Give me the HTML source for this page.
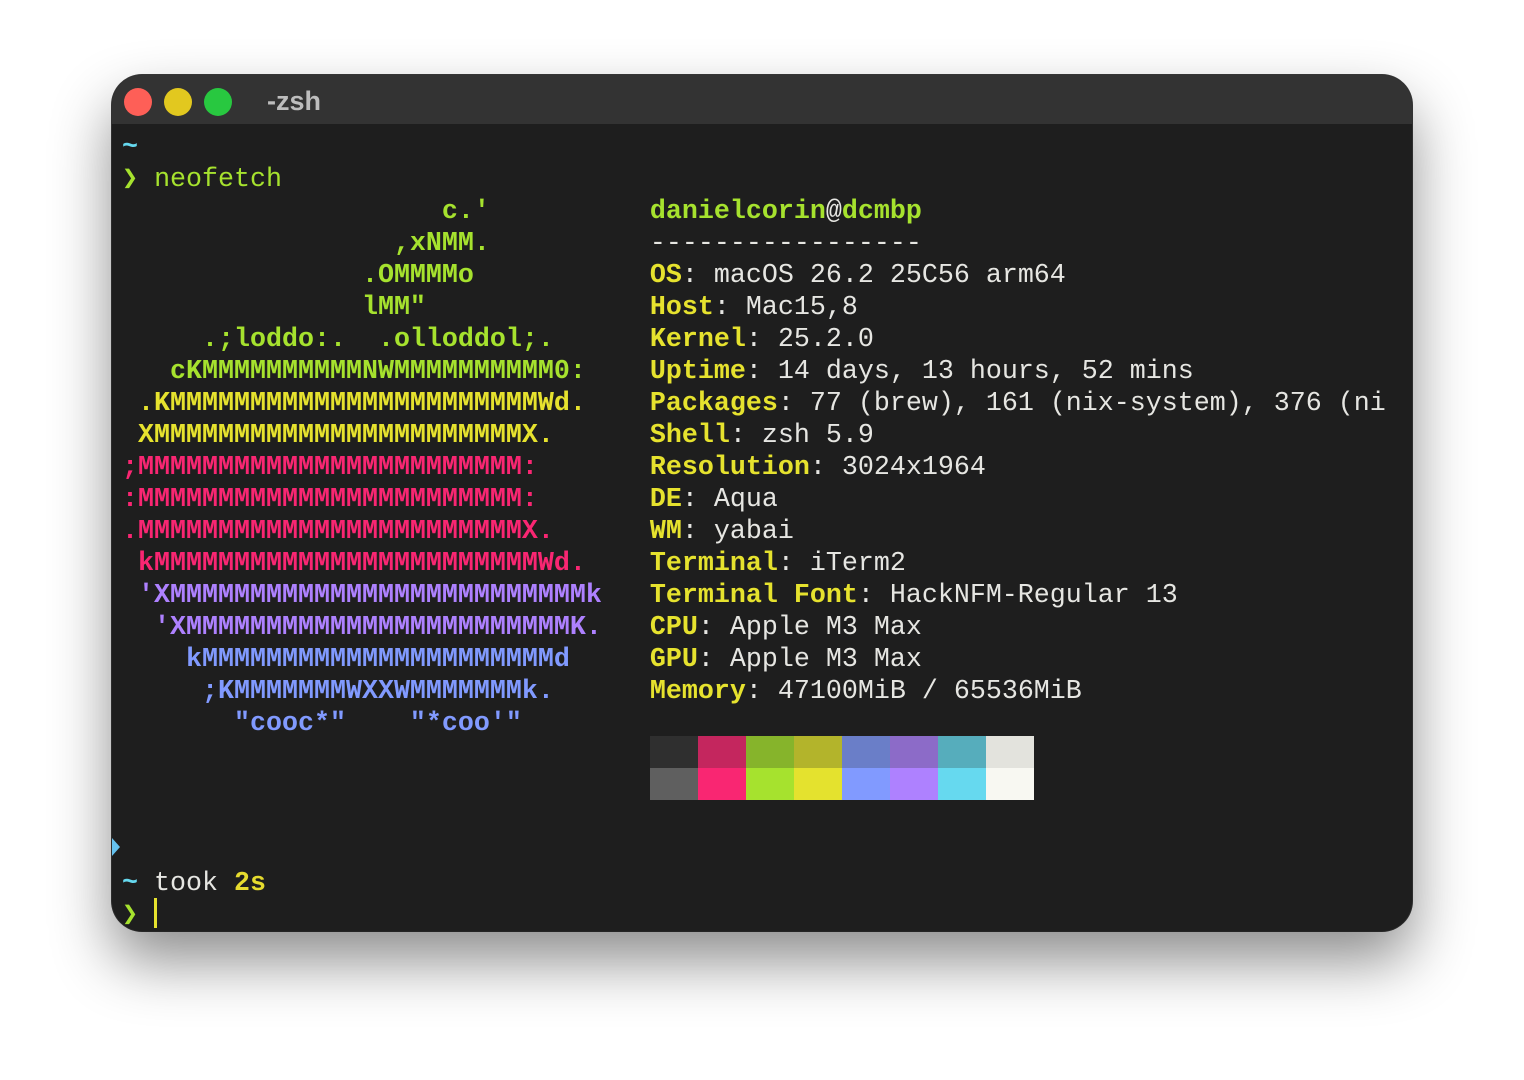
<!DOCTYPE html>
<html><head><meta charset="utf-8"><style>
html,body{margin:0;padding:0;background:#fff;width:1524px;height:1080px;overflow:hidden}
.win{position:absolute;left:112px;top:75px;width:1300px;height:856px;border-radius:30px;background:#1e1e1e;overflow:hidden;box-shadow:0 30px 60px rgba(0,0,0,.45),0 0 0 1px #3a3a3a;}
.tb{position:absolute;left:0;top:0;width:100%;height:49px;background:#333333}
.dot{position:absolute;top:13px;width:28px;height:28px;border-radius:50%}
.title{position:absolute;left:155px;top:11px;font:bold 27px "Liberation Sans",sans-serif;color:#bdbdbd}
pre{position:absolute;left:10px;top:57px;margin:0;font-family:"Liberation Mono",monospace;font-size:26.667px;line-height:32px;color:#e6e6e2;white-space:pre}
.g{color:#a6e22e;font-weight:bold}.y{color:#e6e22e;font-weight:bold}.r{color:#f92672;font-weight:bold}.m{color:#ae81ff;font-weight:bold}.b{color:#819aff;font-weight:bold}
.c{color:#66d9ef;font-weight:bold}.gn{color:#a6e22e}.yl{color:#e6db2e;font-weight:bold}
.pal{position:absolute;left:538px;top:661px;display:grid;grid-template-columns:repeat(8,48px);grid-template-rows:32px 32px}
.cur{position:absolute;left:42px;top:823px;width:3px;height:30px;background:#e6e22e}
.mk{position:absolute;left:0;top:763px;width:0;height:0;border-top:9px solid transparent;border-bottom:9px solid transparent;border-left:8px solid #66c2ef}
</style></head><body>
<div class="win">
<div class="tb"></div>
<div class="dot" style="left:12px;background:#fe5f57"></div>
<div class="dot" style="left:52px;background:#e2c81f"></div>
<div class="dot" style="left:92px;background:#28c840"></div>
<div class="title">-zsh</div>
<pre><span class="c">~</span>
<span class="g">❯</span> <span class="gn">neofetch</span>
<span class="g">                    c.'          </span><span class="g">danielcorin</span>@<span class="g">dcmbp</span>
<span class="g">                 ,xNMM.          </span>-----------------
<span class="g">               .OMMMMo           </span><span class="y">OS</span>: macOS 26.2 25C56 arm64
<span class="g">               lMM"              </span><span class="y">Host</span>: Mac15,8
<span class="g">     .;loddo:.  .olloddol;.      </span><span class="y">Kernel</span>: 25.2.0
<span class="g">   cKMMMMMMMMMMNWMMMMMMMMMM0:    </span><span class="y">Uptime</span>: 14 days, 13 hours, 52 mins
<span class="y"> .KMMMMMMMMMMMMMMMMMMMMMMMWd.    </span><span class="y">Packages</span>: 77 (brew), 161 (nix-system), 376 (ni
<span class="y"> XMMMMMMMMMMMMMMMMMMMMMMMX.      </span><span class="y">Shell</span>: zsh 5.9
<span class="r">;MMMMMMMMMMMMMMMMMMMMMMMM:       </span><span class="y">Resolution</span>: 3024x1964
<span class="r">:MMMMMMMMMMMMMMMMMMMMMMMM:       </span><span class="y">DE</span>: Aqua
<span class="r">.MMMMMMMMMMMMMMMMMMMMMMMMX.      </span><span class="y">WM</span>: yabai
<span class="r"> kMMMMMMMMMMMMMMMMMMMMMMMMWd.    </span><span class="y">Terminal</span>: iTerm2
<span class="m"> 'XMMMMMMMMMMMMMMMMMMMMMMMMMMk   </span><span class="y">Terminal Font</span>: HackNFM-Regular 13
<span class="m">  'XMMMMMMMMMMMMMMMMMMMMMMMMK.   </span><span class="y">CPU</span>: Apple M3 Max
<span class="b">    kMMMMMMMMMMMMMMMMMMMMMMd     </span><span class="y">GPU</span>: Apple M3 Max
<span class="b">     ;KMMMMMMMWXXWMMMMMMMk.      </span><span class="y">Memory</span>: 47100MiB / 65536MiB
<span class="b">       "cooc*"    "*coo'"        </span>




<span class="c">~</span> took <span class="yl">2s</span>
<span class="g">❯</span></pre>
<div class="pal">
<div style="background:#2f2f2f"></div><div style="background:#c4265e"></div><div style="background:#86b42b"></div><div style="background:#b3b42b"></div><div style="background:#6a7ec8"></div><div style="background:#8c6bc8"></div><div style="background:#56adbc"></div><div style="background:#e3e3dd"></div>
<div style="background:#5f5f5f"></div><div style="background:#f92672"></div><div style="background:#a6e22e"></div><div style="background:#e4e22e"></div><div style="background:#819aff"></div><div style="background:#ae81ff"></div><div style="background:#66d9ef"></div><div style="background:#f8f8f2"></div>
</div>
<div class="mk"></div>
<div class="cur"></div>
</div>
</body></html>
